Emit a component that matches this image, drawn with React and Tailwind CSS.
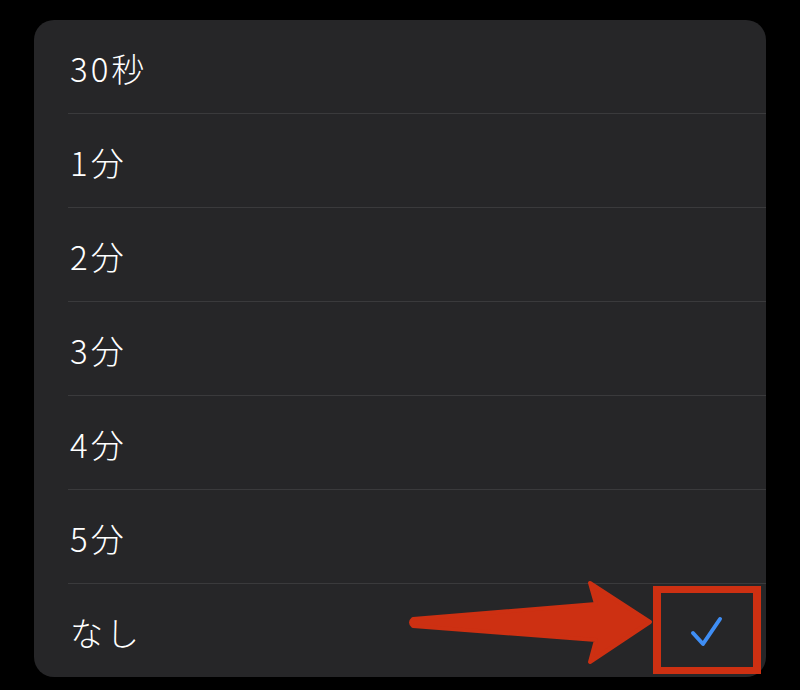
const options = ["30秒", "1分", "2分", "3分", "4分", "5分", "なし"];

function Annotation() {
  return (
    <svg
      className="pointer-events-none absolute left-0 top-0"
      width="800"
      height="690"
      viewBox="0 0 800 690"
    >
      <path
        d="M413 619 L596 604 L590 583 L650 622 L590 662 L596 640 L413 626 Q409 622.5 413 619 Z"
        fill="#cd3012"
        stroke="#cd3012"
        strokeWidth="4"
        strokeLinejoin="round"
      />
      <path
        d="M693 633 L703 644 L720 619"
        fill="none"
        stroke="#3f8ef5"
        strokeWidth="4"
        strokeLinecap="round"
        strokeLinejoin="round"
      />
    </svg>
  );
}

export default function App() {
  return (
    <div
      className="relative h-[690px] w-[800px] overflow-hidden bg-black pt-5 pl-[34px]"
      style={{ fontFamily: '"Noto Sans CJK JP", "Noto Sans", sans-serif' }}
    >
      <div className="h-[657px] w-[732px] overflow-hidden rounded-[20px] bg-[#262628]">
        {options.map((label, i) => (
          <div key={label} className="pl-[34px]">
            <div
              className={
                i < options.length - 1
                  ? "flex h-[94px] items-center border-b border-[#3a3a3c] pt-[5px] pl-[2px] text-[33px] font-light tracking-[3px] text-white"
                  : "flex h-[93px] items-center pt-[5px] pl-[2px] text-[33px] font-light tracking-[3px] text-white"
              }
            >
              {label}
            </div>
          </div>
        ))}
      </div>

      <div className="absolute left-[653px] top-[586px] h-[88px] w-[108px] border-x-8 border-y-[7px] border-[#cd3012]" />
      <Annotation />
    </div>
  );
}
